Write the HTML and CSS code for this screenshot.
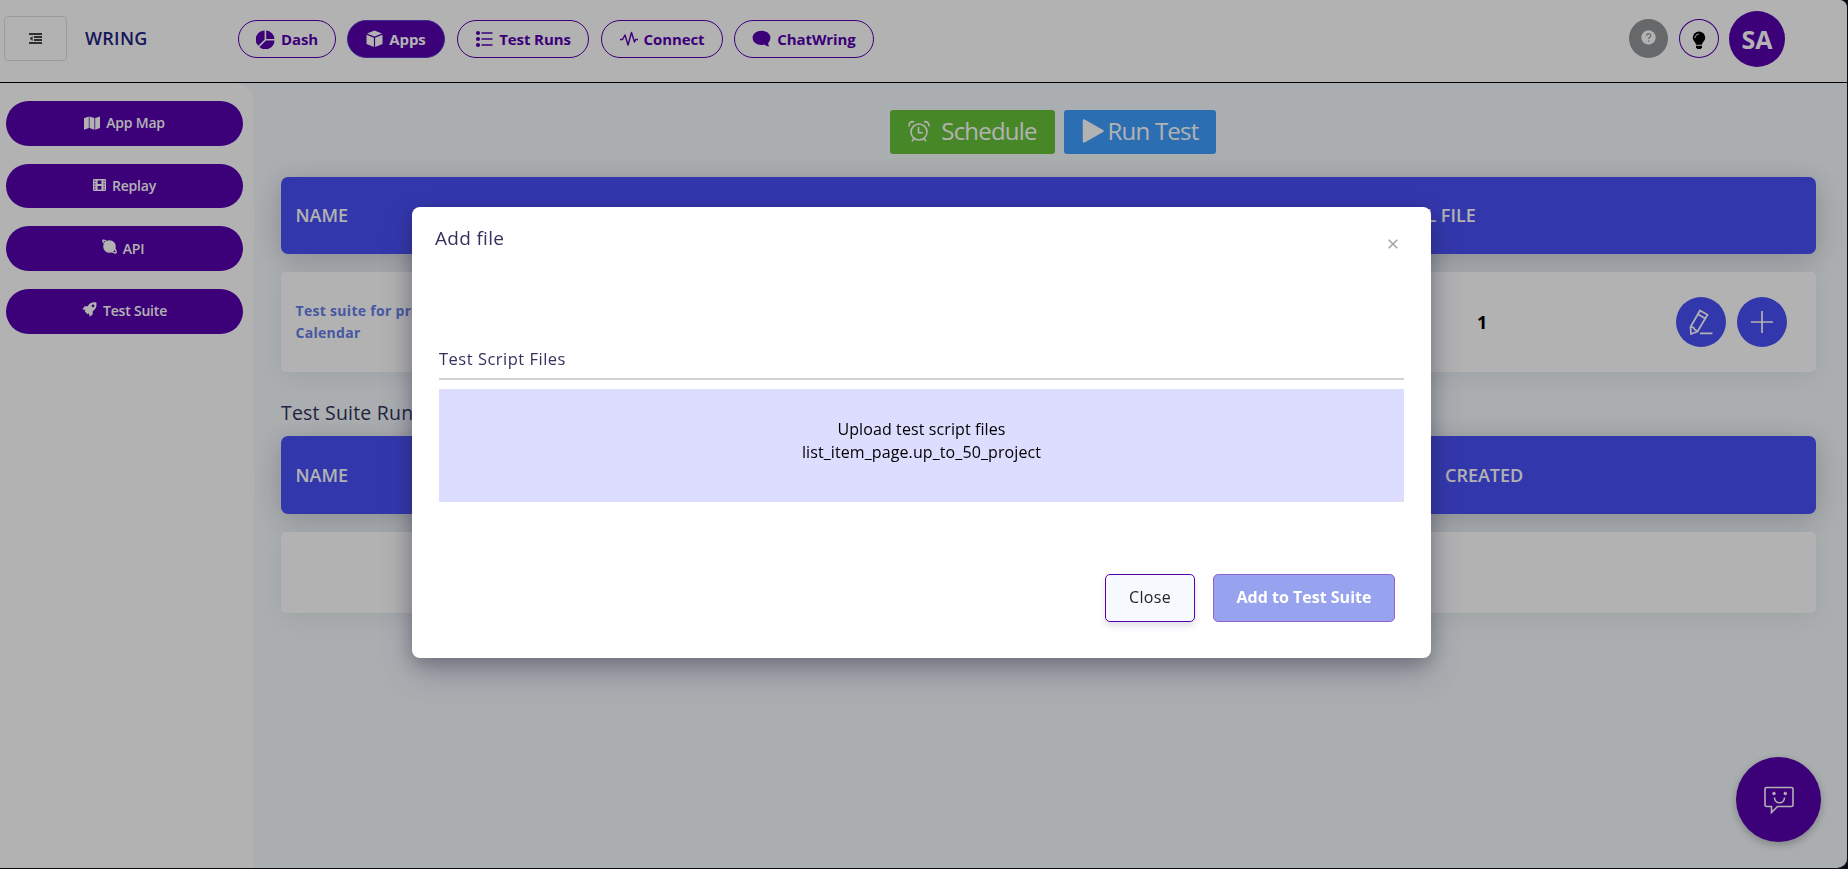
FILE: index.html
```html
<!DOCTYPE html>
<html lang="en">
<head>
<meta charset="utf-8">
<title>Wring</title>
<link rel="stylesheet" href="styles.css">
</head>
<body>
<div class="app">
  <header class="topbar">
    <button class="menu-btn"><svg width="13" height="11" viewBox="0 0 13 11"><path d="M0 1h13M5 4h8M5 7h8M0 10h13" stroke="#444" stroke-width="1.8"/><path d="M3.6 3v5L.6 5.5z" fill="#444"/></svg></button>
    <span class="brand">WRING</span>
    <nav class="nav">
      <a class="pill dash"><svg width="19" height="19" viewBox="0 0 19 19" fill="currentColor"><path d="M8.6.5v9L2.3 15.8A9 9 0 0 1 8.6.5zM10.2.5a9 9 0 0 1 8.3 8.4h-8.3zM18.5 10.5a9 9 0 0 1-15.1 6.4l6.6-6.4z"/></svg>Dash</a>
      <a class="pill apps"><svg width="17" height="18" viewBox="0 0 17 18" fill="currentColor"><path d="M8.5.6 16 3.5 8.5 6.6 1 3.500zM.5 4.700l7.400 3v9.300l-7.400-3zM16.500 4.700l-7.400 3v9.300l7.400-3z"/></svg>Apps</a>
      <a class="pill runs"><svg width="18" height="18" viewBox="0 0 18 18"><g fill="currentColor"><circle cx="3" cy="3" r="2.100"/><circle cx="3" cy="9" r="2.100"/><circle cx="3" cy="15" r="2.100"/></g><path d="M6.500 3H17.500M6.500 9H17.500M6.500 15H17.500" stroke="currentColor" stroke-width="1.600"/></svg>Test Runs</a>
      <a class="pill connect"><svg width="18" height="16" viewBox="0 0 18 16"><path d="M0 8.500h2.500L5 4l3 10 3.500-12.500L14.500 11l1.200-2.500H18" fill="none" stroke="currentColor" stroke-width="1.400" stroke-linejoin="round"/></svg>Connect</a>
      <a class="pill chat"><svg width="19" height="18" viewBox="0 0 19 18" fill="currentColor"><path d="M9.500.7c5 0 8.900 3 8.900 7 0 2.200-1 4-2.300 5.200.1 1.500.6 2.600 1 3.600-1.900-.2-3.600-.9-4.900-1.900-5.900 1.400-11.600-1.900-11.600-6.900 0-4 4-7 8.900-7z"/></svg>ChatWring</a>
    </nav>
    <div class="tools">
      <button class="tool help"><svg width="15" height="15" viewBox="0 0 15 15"><circle cx="7.500" cy="7.500" r="7.200" fill="#fff"/><path d="M5.500 5.700c0-2.700 4.200-2.600 4.200 0 0 1.500-2 1.600-2 3.300" fill="none" stroke="#939599" stroke-width="1.200"/><circle cx="7.700" cy="11" r=".8" fill="#939599"/></svg></button>
      <button class="tool bulb"><svg width="14" height="19" viewBox="0 0 14 19"><path d="M7 .5a6.200 6.200 0 0 1 6.200 6.200c0 3-2.700 4-3.200 7H4c-.5-3-3.200-4-3.200-7A6.200 6.200 0 0 1 7 .5z"/><path d="M4 14.800h6v1.500L8.700 18H5.300L4 16.300z"/><path d="M3 7c0-2.200 1.500-3.800 3.700-3.900" fill="none" stroke="#fff" stroke-width="1"/></svg></button>
      <span class="avatar">SA</span>
    </div>
  </header>
  <div class="body">
    <aside class="sidebar">
      <a class="side"><svg width="16" height="14" viewBox="0 0 16 14" fill="currentColor"><path d="M0 2.200 4.800.5v11.600L0 13.700zM5.500.5l4.900 1.600v11.600l-4.900-1.600zM11.200 2.100 16 .4v11.700l-4.800 1.600z"/></svg>App Map</a>
      <a class="side"><svg width="13" height="12" viewBox="0 0 13 12"><rect width="13" height="12" rx="1" fill="#fff"/><path d="M1.900 1.400v9.500M11.100 1.400v9.500" stroke="#5600ae" stroke-width="1" stroke-dasharray="1.500 1.200"/><path d="M4.600 1.500h3.800v3.500H4.600zM4.600 7h3.800v3.500H4.600z" fill="#5600ae"/></svg>Replay</a>
      <a class="side api"><svg class="up" width="15" height="15" viewBox="0 0 15 15"><circle cx="7.500" cy="7.500" r="6.300" fill="#fff"/><path d="M2.500 4.500C-.5 1 .5 0 4.500 2.500M10 12.700c3.500 2.300 5.700 1.500 2.900-2.700" fill="none" stroke="#fff" stroke-width="1.500"/></svg>API</a>
      <a class="side"><svg class="up" width="15" height="15" viewBox="0 0 15 15"><path fill="#fff" fill-rule="evenodd" d="M14.500.4C9.500-.1 7.300 1.600 5.700 4.200H2.600L.3 7.500l3.100.3L2.800 9.600l2.500 2.500 1.800-.5.400 3.100 3.200-2.200V9.300c2.700-1.700 4.300-4.100 3.700-8.900zM11 5.200a1.300 1.300 0 1 1 .1-2.600A1.300 1.300 0 0 1 11 5.200z"/></svg>Test Suite</a>
    </aside>
    <main class="main">
      <div class="actions">
        <button class="act schedule"><svg width="22" height="22" viewBox="0 0 22 22" fill="none" stroke="currentColor" stroke-width="1.600"><circle cx="11" cy="12" r="8"/><path d="M10.500 7v5.800H15M6 18.500l-2 2.800M16 18.500l2 2.800M1.200 6.500C.5 3.500 3 .8 6 2M20.800 6.500C21.500 3.500 19 .8 16 2"/></svg>Schedule</button>
        <button class="act run"><svg width="22" height="24" viewBox="0 0 22 24"><path d="M2 1.500 20.500 12 2 22.500z" fill="#fff" stroke="#fff" stroke-width="2.500" stroke-linejoin="round"/></svg>Run Test</button>
      </div>
      <div class="thead"><span>NAME</span><span class="total">TOTAL FILE</span></div>
      <div class="row suite">
        <span class="link">Test suite for project<br>Calendar</span>
        <span class="count">1</span>
        <div class="ops">
          <button class="op"><svg width="24" height="26" viewBox="0 0 24 26" fill="none" stroke="#fff" stroke-width="1.700"><path d="M11 1.500 18.500 5.800 8.500 22.500 2 25 1.500 18zM9 5.200l7.300 4.300M1.500 18l3 .5 1.100 2 2.900 2M11 24.300h12.500"/></svg></button>
          <button class="op"><svg width="24" height="24" viewBox="0 0 24 24"><path d="M12 1v22M1 12h22" stroke="#fff" stroke-width="1.700"/></svg></button>
        </div>
      </div>
      <h2 class="subtitle">Test Suite Runs</h2>
      <div class="thead second"><span>NAME</span><span>CREATED</span></div>
      <div class="row empty"></div>
    </main>
  </div>
  <button class="fab"><svg width="31" height="28" viewBox="0 0 31 28" fill="none" stroke="#fff" stroke-width="1.600"><path d="M2.500 1.500h25a1.500 1.500 0 0 1 1.500 1.500v16a1.500 1.500 0 0 1-1.500 1.500H13.500l-6 6v-6h-5A1.500 1.500 0 0 1 1 19V3a1.500 1.500 0 0 1 1.500-1.500zM10.500 11.500c0 7 10 7 10 0"/><circle cx="10" cy="7.500" r="1.300" fill="#fff" stroke-width="1"/><circle cx="21.300" cy="7.500" r="1.300" fill="#fff" stroke-width="1"/></svg></button>
</div>
<div class="overlay">
  <section class="modal">
    <div class="modal-head"><h3>Add file</h3><svg class="x" width="10" height="10" viewBox="0 0 10 10"><path d="M.7.700l8.600 8.600M9.300.7.700 9.300" stroke="#a5a5a5" stroke-width="1.600"/></svg></div>
    <h4>Test Script Files</h4>
    <div class="drop">Upload test script files<br>list_item_page.up_to_50_project</div>
    <div class="modal-foot"><button class="btn close">Close</button><button class="btn add">Add to Test Suite</button></div>
  </section>
</div>
</body>
</html>
```
FILE: styles.css
```css
* { box-sizing: border-box; }
html { background: #10141f; }
body { margin: 0; height: 869px; overflow: hidden; font-family: "Open Sans", "Noto Sans", sans-serif; }
button { font-family: inherit; padding: 0; margin: 0; }
h2, h3, h4 { margin: 0; font-weight: 500; color: #32325d; }
svg { display: block; flex: none; }

.app { position: relative; width: 1847px; height: 868px; display: flex; flex-direction: column; background: #f5fafc; border-radius: 0 8px 10px 0; overflow: hidden; }
.topbar { height: 83px; flex: none; background: #fff; border-bottom: 1px solid #000; display: flex; align-items: flex-start; padding: 0 62px 0 4px; }
.menu-btn { width: 63px; height: 45px; margin-top: 16px; border: 1px solid #dfe0ea; border-radius: 4px; background: #fff; display: flex; align-items: center; justify-content: center; }
.brand { width: 153px; margin: 26px 0 0 18px; font-size: 18px; line-height: 25px; font-weight: 600; color: #1f2381; letter-spacing: .3px; }
.nav { display: flex; gap: 12px; margin-top: 20px; }
.pill { height: 38px; border: 1px solid #5600ae; border-radius: 19px; color: #5600ae; display: flex; align-items: center; justify-content: center; gap: 6px; font-size: 15px; font-weight: 700; letter-spacing: -.1px; white-space: nowrap; }
.dash, .apps { width: 98px; }
.apps { margin-left: -1px; background: #5600ae; color: #fff; border-color: #5b3fd0; }
.runs { width: 132px; }
.connect { width: 122px; }
.chat { width: 140px; margin-left: -1px; }
.tools { margin-left: auto; margin-top: 11px; display: flex; gap: 10px; align-items: flex-start; }
.tool { width: 40px; height: 39px; margin-top: 8px; border-radius: 50%; border: 1px solid #5600ae; background: #fff; display: flex; align-items: center; justify-content: center; }
.help { width: 39px; margin-right: 1px; background: #939599; border: 0; padding-bottom: 3px; }
.bulb { padding-top: 3px; }
.avatar { width: 56px; height: 56px; padding-bottom: 1px; border-radius: 50%; background: #5600ae; color: #fff; font-size: 25px; font-weight: 700; display: flex; align-items: center; justify-content: center; }

.body { flex: 1; display: flex; min-height: 0; }
.sidebar { width: 254px; background: #fff; border-top-right-radius: 20px; padding: 18px 11px 0 6px; display: flex; flex-direction: column; gap: 18.200px; }
.side { height: 44.500px; padding-bottom: 1px; border-radius: 22.500px; background: #5600ae; color: #fff; font-size: 14px; font-weight: 600; letter-spacing: -.2px; display: flex; align-items: center; justify-content: center; gap: 6px; }
.api { padding-right: 3px; }
.up { margin-top: -3px; }
.main { flex: 1; padding: 27px 27px 0 27px; border-right: 4px solid #fafafa; min-width: 0; }
.actions { display: flex; justify-content: center; gap: 9px; margin-bottom: 23px; padding-left: 9px; }
.act { height: 44px; padding-bottom: 3px; border: 0; border-radius: 3px; color: #fff; font-size: 24px; letter-spacing: -.8px; display: flex; align-items: center; justify-content: center; }
.schedule { width: 165px; background: #67c23a; gap: 11px; }
.run { width: 152px; background: #409eff; gap: 4px; }
.thead { height: 77px; padding-bottom: 1px; border-radius: 7px; background: #494ff7; color: #fff; font-size: 18px; font-weight: 600; display: grid; grid-template-columns: 1fr 371px; align-items: center; padding-left: 14.500px; box-shadow: 0 7px 35px rgba(50,50,93,.13), 0 4px 25px rgba(0,0,0,.1); }
.total { margin-left: -65px; }
.row { background: #fff; border-radius: 5px; margin-top: 18px; box-shadow: 0 6px 25px rgba(80,100,110,.1); }
.suite { height: 100px; display: grid; grid-template-columns: 1fr 199px 140px; align-items: center; padding-left: 14.500px; }
.link { color: #667eea; font-size: 14px; font-weight: 700; line-height: 22px; letter-spacing: .3px; }
.count { font-size: 18px; font-weight: 700; }
.ops { display: flex; gap: 11px; }
.op { width: 50px; height: 50px; border: 0; border-radius: 50%; background: #494ff7; display: flex; align-items: center; justify-content: center; }
.subtitle { height: 64px; padding-top: 27px; font-size: 19.500px; line-height: 28px; letter-spacing: .2px; }
.second { height: 78px; padding-bottom: 0; }
.empty { height: 81px; }
.fab { position: absolute; left: 1736px; top: 757px; width: 85px; height: 85px; border: 0; border-radius: 50%; background: #5600ae; display: flex; align-items: center; justify-content: center; padding-left: 1px; box-shadow: 0 3px 8px rgba(0,0,0,.25); }

.overlay { position: fixed; inset: 0; background: rgba(0,0,0,.3); }
.modal { width: 1019px; height: 451px; margin: 207px 0 0 412px; background: #fff; border-radius: 8px; padding: 18px 27px 0; box-shadow: 0 15px 35px rgba(50,50,93,.3), 0 5px 20px rgba(0,0,0,.25); }
.modal-head { display: flex; justify-content: space-between; height: 110px; margin-left: -4px; padding-right: 6px; }
.modal-head h3 { font-size: 19px; line-height: 27px; letter-spacing: .3px; }
.x { margin-top: 14px; }
.modal h4 { height: 45px; padding-top: 12px; border-bottom: 2px solid #d3d3d3; font-size: 16.500px; line-height: 24px; letter-spacing: .5px; }
.drop { margin-top: 9px; height: 113px; background: #ddf; padding-top: 29px; text-align: center; font-size: 16px; line-height: 23px; font-weight: 500; letter-spacing: .1px; }
.modal-foot { display: flex; justify-content: flex-end; gap: 18px; margin-top: 72px; padding-right: 9px; }
.btn { height: 48px; padding-bottom: 2px; border: 1px solid #5600ae; border-radius: 5px; font-size: 16px; }
.close { width: 90px; background: #f6fafe; color: #212529; font-weight: 500; letter-spacing: .3px; box-shadow: 0 4px 6px rgba(50,50,93,.15); }
.add { width: 182px; background: #97a3ee; border-color: #9562cf; color: #fff; font-weight: 700; }
```
